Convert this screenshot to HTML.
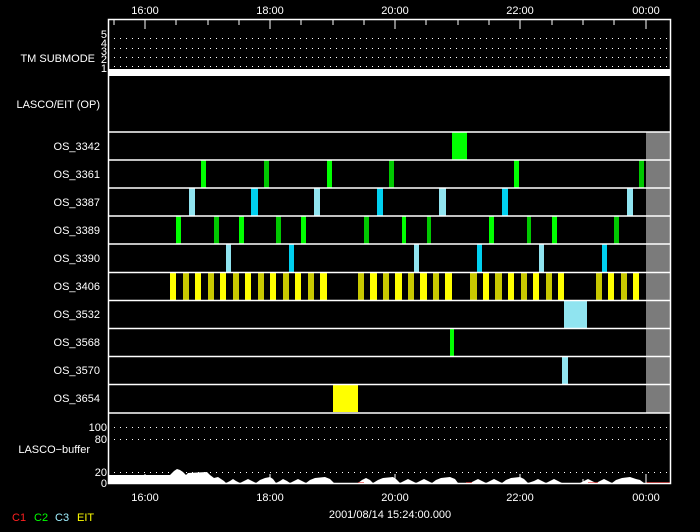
<!DOCTYPE html>
<html><head><style>
html,body{margin:0;padding:0;background:#000;width:700px;height:532px;overflow:hidden}
svg{display:block}
text{font-family:"Liberation Sans",sans-serif;font-size:11px;fill:#fff}
</style></head><body>
<svg width="700" height="532" viewBox="0 0 700 532" xmlns="http://www.w3.org/2000/svg">
<rect width="700" height="532" fill="#000"/>
<!-- time labels top -->
<g text-anchor="middle">
<text x="145" y="14">16:00</text><text x="270" y="14">18:00</text><text x="395" y="14">20:00</text><text x="520" y="14">22:00</text><text x="646" y="14">00:00</text>
<text x="145" y="501">16:00</text><text x="270" y="501">18:00</text><text x="395" y="501">20:00</text><text x="520" y="501">22:00</text><text x="646" y="501">00:00</text>
<text x="390" y="518">2001/08/14 15:24:00.000</text>
</g>
<!-- legend -->
<text x="12" y="521" fill="#ff0000" style="fill:#ff2020">C1</text>
<text x="34" y="521" style="fill:#00ff00">C2</text>
<text x="55" y="521" style="fill:#a0f0ff">C3</text>
<text x="77" y="521" style="fill:#ffff00">EIT</text>
<!-- left labels -->
<g text-anchor="end">
<text x="95" y="62">TM SUBMODE</text>
<text x="100" y="108">LASCO/EIT (OP)</text>
<text x="100" y="150">OS_3342</text>
<text x="100" y="178">OS_3361</text>
<text x="100" y="206">OS_3387</text>
<text x="100" y="234">OS_3389</text>
<text x="100" y="262">OS_3390</text>
<text x="100" y="290">OS_3406</text>
<text x="100" y="318">OS_3532</text>
<text x="100" y="346">OS_3568</text>
<text x="100" y="374">OS_3570</text>
<text x="100" y="402">OS_3654</text>
<text x="90" y="453">LASCO−buffer</text>
<text x="107" y="431">100</text>
<text x="107" y="443">80</text>
<text x="107" y="476">20</text>
<text x="107" y="487">0</text>
</g>
<g text-anchor="end" style="font-size:9px">
<text x="107" y="38">5</text><text x="107" y="47">4</text><text x="107" y="55">3</text><text x="107" y="63">2</text><text x="107" y="72">1</text>
</g>
<!-- submode dotted -->
<g stroke="#fff" stroke-width="1" stroke-dasharray="1 5">
<line x1="114" y1="38.5" x2="670" y2="38.5"/>
<line x1="114" y1="48.5" x2="670" y2="48.5"/>
<line x1="114" y1="57.5" x2="670" y2="57.5"/>
<line x1="114" y1="66.5" x2="670" y2="66.5"/>
<line x1="114" y1="427.5" x2="670" y2="427.5"/>
<line x1="114" y1="439.5" x2="670" y2="439.5"/>
<line x1="114" y1="472.5" x2="670" y2="472.5"/>
</g>
<rect x="108" y="69" width="563" height="7" fill="#fff"/>
<!-- bars -->
<rect x="452" y="132" width="15" height="28" fill="#00ff00"/>
<g fill="#00ff00"><rect x="201" y="160" width="5" height="28"/><rect x="327" y="160" width="5" height="28"/><rect x="514" y="160" width="5" height="28"/>
<rect x="176" y="216" width="5" height="28"/><rect x="239" y="216" width="5" height="28"/><rect x="301" y="216" width="5" height="28"/><rect x="402" y="216" width="4" height="28"/><rect x="489" y="216" width="5" height="28"/><rect x="552" y="216" width="5" height="28"/>
<rect x="450" y="328" width="4" height="28"/></g>
<g fill="#00c800"><rect x="264" y="160" width="5" height="28"/><rect x="389" y="160" width="5" height="28"/><rect x="639" y="160" width="5" height="28"/>
<rect x="214" y="216" width="5" height="28"/><rect x="276" y="216" width="5" height="28"/><rect x="364" y="216" width="5" height="28"/><rect x="427" y="216" width="4" height="28"/><rect x="527" y="216" width="4" height="28"/><rect x="614" y="216" width="5" height="28"/></g>
<g fill="#90e4f0"><rect x="189" y="188" width="6" height="28"/><rect x="314" y="188" width="6" height="28"/><rect x="439" y="188" width="7" height="28"/><rect x="627" y="188" width="6" height="28"/>
<rect x="226" y="244" width="5" height="28"/><rect x="414" y="244" width="5" height="28"/><rect x="539" y="244" width="5" height="28"/>
<rect x="564" y="300" width="23" height="28"/><rect x="562" y="356" width="6" height="28"/></g>
<g fill="#00d0f0"><rect x="251" y="188" width="7" height="28"/><rect x="377" y="188" width="6" height="28"/><rect x="502" y="188" width="6" height="28"/>
<rect x="289" y="244" width="5" height="28"/><rect x="477" y="244" width="5" height="28"/><rect x="602" y="244" width="5" height="28"/></g>
<g fill="#ffff00"><rect x="170" y="272" width="6" height="28"/><rect x="195" y="272" width="6" height="28"/><rect x="220" y="272" width="6" height="28"/><rect x="245" y="272" width="6" height="28"/><rect x="270" y="272" width="6" height="28"/><rect x="295" y="272" width="6" height="28"/><rect x="320" y="272" width="7" height="28"/><rect x="370" y="272" width="7" height="28"/><rect x="395" y="272" width="7" height="28"/><rect x="420" y="272" width="7" height="28"/><rect x="445" y="272" width="7" height="28"/><rect x="483" y="272" width="6" height="28"/><rect x="508" y="272" width="6" height="28"/><rect x="533" y="272" width="6" height="28"/><rect x="558" y="272" width="6" height="28"/><rect x="608" y="272" width="6" height="28"/><rect x="633" y="272" width="6" height="28"/>
<rect x="333" y="384" width="25" height="28"/></g>
<g fill="#c8c800"><rect x="183" y="272" width="6" height="28"/><rect x="208" y="272" width="6" height="28"/><rect x="233" y="272" width="6" height="28"/><rect x="258" y="272" width="6" height="28"/><rect x="283" y="272" width="6" height="28"/><rect x="308" y="272" width="6" height="28"/><rect x="358" y="272" width="6" height="28"/><rect x="383" y="272" width="6" height="28"/><rect x="408" y="272" width="6" height="28"/><rect x="433" y="272" width="6" height="28"/><rect x="470" y="272" width="7" height="28"/><rect x="495" y="272" width="7" height="28"/><rect x="521" y="272" width="6" height="28"/><rect x="546" y="272" width="6" height="28"/><rect x="596" y="272" width="6" height="28"/><rect x="621" y="272" width="6" height="28"/></g>
<rect x="646" y="132" width="25" height="281" fill="#7b7b7b"/>
<!-- row lines -->
<g stroke="#fff" stroke-width="1.5">
<line x1="108" y1="132" x2="671" y2="132"/><line x1="108" y1="160" x2="671" y2="160"/><line x1="108" y1="188" x2="671" y2="188"/><line x1="108" y1="216" x2="671" y2="216"/><line x1="108" y1="244" x2="671" y2="244"/><line x1="108" y1="272.5" x2="671" y2="272.5"/><line x1="108" y1="300.5" x2="671" y2="300.5"/><line x1="108" y1="328.5" x2="671" y2="328.5"/><line x1="108" y1="356.5" x2="671" y2="356.5"/><line x1="108" y1="384.5" x2="671" y2="384.5"/><line x1="108" y1="413" x2="671" y2="413"/>
</g>
<!-- buffer -->
<polygon fill="#fff" points="108,483 108,475 170,475 174,471 177,469 180,470 183,472 186,475 188,473 207,472 210,475 214,478 218,477 221,479 224,481 226,483 230,481 233,479 236,481 240,483 244,481 248,479 252,481 256,483 260,480 265,478 270,477 273,479 276,483 280,481 283,479 287,481 290,483 294,481 298,479 302,481 306,483 310,480 315,478 325,477 330,479 334,483 358,483 362,480 366,478 370,480 373,483 378,480 383,478 393,477 396,479 400,483 404,481 408,479 412,481 416,483 420,481 424,479 428,481 432,483 436,480 441,478 450,477 455,479 458,483 470,483 474,481 478,479 482,481 486,483 490,481 494,479 498,481 502,483 506,480 511,478 520,477 524,479 528,483 534,481 538,479 542,481 546,483 550,481 554,479 558,481 562,483 580,483 584,481 588,479 592,481 596,483 600,481 604,479 608,481 612,483 616,480 622,478 630,477 636,479 640,480 644,483"/>
<g stroke="#e00000" stroke-width="1.5"><line x1="646" y1="483" x2="671" y2="483"/><line x1="588" y1="483" x2="598" y2="483"/><line x1="358" y1="483" x2="364" y2="483"/><line x1="466" y1="483" x2="472" y2="483"/></g>
<!-- frame -->
<rect x="108.5" y="19.5" width="562" height="464" fill="none" stroke="#fff" stroke-width="1.5"/>
<!-- ticks -->
<g stroke="#fff" stroke-width="1">
<line x1="114" y1="19" x2="114" y2="25"/><line x1="145" y1="19" x2="145" y2="29"/><line x1="176" y1="19" x2="176" y2="25"/><line x1="208" y1="19" x2="208" y2="25"/><line x1="239" y1="19" x2="239" y2="25"/><line x1="270" y1="19" x2="270" y2="29"/><line x1="301" y1="19" x2="301" y2="25"/><line x1="333" y1="19" x2="333" y2="25"/><line x1="364" y1="19" x2="364" y2="25"/><line x1="395" y1="19" x2="395" y2="29"/><line x1="426" y1="19" x2="426" y2="25"/><line x1="458" y1="19" x2="458" y2="25"/><line x1="489" y1="19" x2="489" y2="25"/><line x1="520" y1="19" x2="520" y2="29"/><line x1="552" y1="19" x2="552" y2="25"/><line x1="583" y1="19" x2="583" y2="25"/><line x1="614" y1="19" x2="614" y2="25"/><line x1="646" y1="19" x2="646" y2="29"/>
<line x1="145" y1="474" x2="145" y2="483"/><line x1="270" y1="474" x2="270" y2="483"/><line x1="395" y1="474" x2="395" y2="483"/><line x1="520" y1="474" x2="520" y2="483"/><line x1="646" y1="474" x2="646" y2="483"/><line x1="583" y1="479" x2="583" y2="483"/>
</g>
</svg>
</body></html>
